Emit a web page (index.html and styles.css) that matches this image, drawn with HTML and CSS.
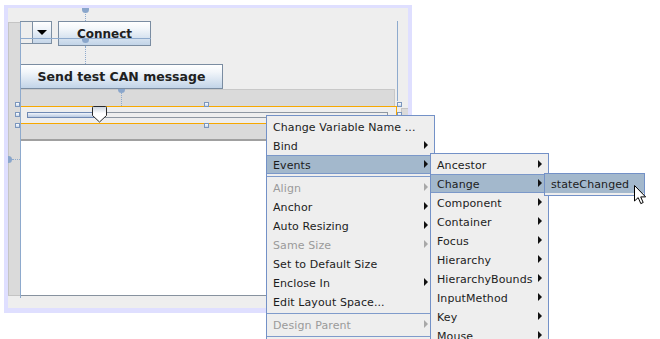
FILE: index.html
```html
<!DOCTYPE html>
<html>
<head>
<meta charset="utf-8">
<link rel="stylesheet" href="styles.css">
</head>
<body>
<div class="designer">
  <div class="panel">
    <div class="strip-left"></div>
    <div class="form">
      <div class="row1">
        <div class="combo"><span class="combo-field"></span><span class="combo-btn"><i class="down"></i></span></div>
        <div class="btn btn-connect">Connect</div>
      </div>
      <div class="btn btn-send">Send test CAN message</div>
      <div class="gray-panel">
        <div class="slider">
          <div class="track"><div class="fill" style="width:70px"></div></div>
          <svg class="thumb" width="15" height="17" viewBox="0 0 15 17">
            <defs>
              <linearGradient id="tg" x1="0" y1="0" x2="0" y2="1">
                <stop offset="0" stop-color="#c9d3df"/>
                <stop offset="0.45" stop-color="#ffffff"/>
                <stop offset="1" stop-color="#ffffff"/>
              </linearGradient>
            </defs>
            <path d="M1.5,0.5 H13.5 Q14.5,0.5 14.5,1.5 V9.5 L7.5,16 L0.5,9.5 V1.5 Q0.5,0.5 1.5,0.5 Z" fill="url(#tg)" stroke="#2a2a2a" stroke-width="1"/>
          </svg>
        </div>
      </div>
      <div class="white-area"></div>
    </div>
    <div class="strip-right"></div>
  </div>
</div>

<div class="guide vline-left"></div>
<div class="guide vline-right"></div>
<div class="guide hline"></div>
<div class="dot-v dv1"></div>
<div class="dot-v dv2"></div>
<div class="dot-v dv3"></div>
<div class="dot-h dh1"></div>
<div class="anchor-down a1"></div>
<div class="anchor-down a2"></div>
<div class="anchor-down a3"></div>
<div class="anchor-right a4"></div>

<div class="handle h1"></div>
<div class="handle h2"></div>
<div class="handle h3"></div>
<div class="handle h4"></div>
<div class="handle h5"></div>
<div class="handle h6"></div>
<div class="handle h7"></div>

<div class="menu menu-main">
  <div class="mi">Change Variable Name ...</div>
  <div class="mi sub">Bind</div>
  <div class="mi sub sel">Events</div>
  <div class="sep"></div>
  <div class="mi sub dis">Align</div>
  <div class="mi sub">Anchor</div>
  <div class="mi sub">Auto Resizing</div>
  <div class="mi sub dis">Same Size</div>
  <div class="mi">Set to Default Size</div>
  <div class="mi sub">Enclose In</div>
  <div class="mi">Edit Layout Space...</div>
  <div class="sep"></div>
  <div class="mi sub dis">Design Parent</div>
  <div class="sep"></div>
</div>

<div class="menu menu-events">
  <div class="mi sub">Ancestor</div>
  <div class="mi sub sel">Change</div>
  <div class="mi sub">Component</div>
  <div class="mi sub">Container</div>
  <div class="mi sub">Focus</div>
  <div class="mi sub">Hierarchy</div>
  <div class="mi sub">HierarchyBounds</div>
  <div class="mi sub">InputMethod</div>
  <div class="mi sub">Key</div>
  <div class="mi sub">Mouse</div>
</div>

<div class="menu menu-change">
  <div class="mi sel flat">stateChanged</div>
</div>

<svg class="cursor" width="13" height="20" viewBox="0 0 13 20">
  <path d="M0.5,0.5 V16 L4.2,12.6 L6.8,18.6 L9.2,17.5 L6.7,11.9 L11.6,11.9 Z" fill="#ffffff" stroke="#000000" stroke-width="1" stroke-linejoin="round"/>
</svg>
</body>
</html>
```

FILE: styles.css
```css
html, body {
  margin: 0;
  padding: 0;
  overflow: hidden;
  background: #ffffff;
}
body {
  position: relative;
  width: 660px;
  height: 339px;
  font-family: "DejaVu Sans", "Noto Sans", sans-serif;
  color: #1c1c1c;
}

/* design surface */
.designer {
  margin: 5px 0 0 4px;
  width: 408px;
  height: 308px;
  box-sizing: border-box;
  border-style: solid;
  border-color: #dfdfff;
  border-width: 3px 4px 5px 4px;
}
.panel {
  display: flex;
  align-items: flex-start;
  width: 400px;
  height: 300px;
  box-sizing: border-box;
  padding-top: 13px;
  background: #eeeeee;
}
.strip-left {
  flex: none;
  width: 12px;
  height: 274px;
  margin-top: 1px;
  box-sizing: border-box;
  background: #dadada;
  border: 1px solid #c4c4c4;
  border-right: none;
}
.strip-right {
  flex: none;
  width: 7px;
  height: 188px;
  margin: 87px 0 0 4px;
  box-sizing: border-box;
  background: #dadada;
  border-top: 1px solid #c4c4c4;
  border-left: 1px solid #c4c4c4;
}
.form {
  flex: none;
  width: 377px;
  height: 275px;
  display: flex;
  flex-direction: column;
  align-items: flex-start;
}
.row1 {
  display: flex;
  align-items: flex-start;
  height: 25px;
}
.combo {
  display: flex;
  width: 32px;
  height: 23px;
  box-sizing: border-box;
  border: 1px solid #7d8fa3;
}
.combo-field {
  width: 11px;
  background: #eeeeee;
  border-right: 1px solid #7d8fa3;
}
.combo-btn {
  flex: 1;
  display: flex;
  align-items: center;
  justify-content: center;
  background: linear-gradient(to bottom, #ffffff 0%, #eef3f9 35%, #c5d6e9 100%);
}
.down {
  width: 0;
  height: 0;
  border-top: 5px solid #000000;
  border-left: 5px solid transparent;
  border-right: 5px solid transparent;
}
.btn {
  display: flex;
  align-items: center;
  justify-content: center;
  box-sizing: border-box;
  height: 25px;
  border: 1px solid #7a8ca1;
  background: linear-gradient(to bottom, #ffffff 0%, #f2f6fa 30%, #c2d4e8 100%);
  font-weight: bold;
  color: #202020;
  white-space: nowrap;
}
.btn-connect {
  width: 93px;
  margin-left: 6px;
  font-size: 12px;
}
.btn-send {
  width: 203px;
  margin-top: 18px;
  font-size: 12.5px;
}
.gray-panel {
  width: 374px;
  height: 52px;
  margin-left: 1px;
  box-sizing: border-box;
  padding-top: 16px;
  background: #dadada;
  border-top: 1px solid #c8c8c8;
  border-right: 1px solid #c8c8c8;
  border-bottom: 2px solid #a0a0a0;
}
.slider {
  position: relative;
  width: 377px;
  height: 18px;
  margin-left: -1px;
  box-sizing: border-box;
  padding: 5px 0 0 6px;
  background: #eeeeee;
  border: 1px solid #f7a800;
}
.track {
  width: 361px;
  height: 6px;
  box-sizing: border-box;
  border: 1px solid #8e97a2;
  background: #eeeeee;
}
.fill {
  height: 100%;
  background: linear-gradient(to bottom, #f0f4fa 0%, #b7c8e0 100%);
  box-shadow: 0 0 0 1px #6f89b3;
}
.thumb {
  position: absolute;
  left: 71px;
  top: -1px;
}
.white-area {
  width: 376px;
  height: 155px;
  margin-left: 1px;
  box-sizing: border-box;
  background: #ffffff;
  border-bottom: 1px solid #87929f;
}

/* guides and anchors drawn over the form */
.guide {
  position: absolute;
  background: #8eaacd;
}
.vline-left { left: 20px; top: 22px; width: 1px; height: 276px; }
.vline-right { left: 397px; top: 21px; width: 1px; height: 80px; }
.hline { left: 20px; top: 38px; width: 131px; height: 1px; }
.dot-v {
  position: absolute;
  width: 0;
  border-left: 1px dotted #8eaacd;
}
.dv1 { left: 85px; top: 12px; height: 9px; }
.dv2 { left: 85px; top: 46px; height: 18px; }
.dv3 { left: 121px; top: 93px; height: 13px; }
.dot-h {
  position: absolute;
  height: 0;
  border-top: 1px dotted #8eaacd;
}
.dh1 { left: 12px; top: 159px; width: 8px; }
.anchor-down {
  position: absolute;
  width: 7px;
  height: 4px;
  background: #8aa6cb;
  border-radius: 0 0 4px 4px;
}
.a1 { left: 82px; top: 8px; height: 5px; }
.a2 { left: 82px; top: 39px; }
.a3 { left: 118px; top: 89px; }
.anchor-right {
  position: absolute;
  width: 4px;
  height: 7px;
  background: #8aa6cb;
  border-radius: 0 4px 4px 0;
}
.a4 { left: 8px; top: 156px; }

.handle {
  position: absolute;
  width: 5px;
  height: 5px;
  box-sizing: border-box;
  border: 1px solid #7b96bd;
  background: linear-gradient(to bottom, #ffffff, #c6d6ea);
}
.h1 { left: 15px; top: 102px; }
.h2 { left: 15px; top: 112px; }
.h3 { left: 15px; top: 123px; }
.h4 { left: 204px; top: 102px; }
.h5 { left: 204px; top: 123px; }
.h6 { left: 397px; top: 102px; }
.h7 { left: 397px; top: 112px; }

/* popup menus */
.menu {
  position: absolute;
  box-sizing: border-box;
  background: #eeeeee;
  border: 1px solid #7391c7;
  overflow: hidden;
  font-size: 11px;
  letter-spacing: 0.1px;
}
.menu-main {
  left: 266px;
  top: 115px;
  width: 169px;
  height: 226px;
  padding-top: 1px;
}
.menu-events {
  left: 430px;
  top: 153px;
  width: 119px;
  height: 188px;
  padding-top: 1px;
}
.menu-change {
  left: 544px;
  top: 173px;
  width: 101px;
  height: 23px;
  padding-bottom: 2px;
}
.mi {
  position: relative;
  height: 19px;
  box-sizing: border-box;
  padding: 1px 0 0 6px;
  line-height: 19px;
  white-space: nowrap;
  color: #1c1c1c;
}
.mi.dis { color: #9a9a9a; }
.mi.sel {
  background: #a3b8cc;
  box-shadow: inset 0 1px 0 #7b98c9, inset 0 -1px 0 #7b98c9;
}
.mi.sel.flat { box-shadow: none; }
.mi.sub::after {
  content: "";
  position: absolute;
  right: 6px;
  top: 5px;
  width: 0;
  height: 0;
  border-left: 4px solid #111111;
  border-top: 4px solid transparent;
  border-bottom: 4px solid transparent;
}
.mi.sub.dis::after { border-left-color: #a8a8a8; }
.sep {
  height: 1px;
  margin: 2px 0 1px;
  background: #7f9bcb;
}
.cursor {
  position: absolute;
  left: 634px;
  top: 185px;
}
```
